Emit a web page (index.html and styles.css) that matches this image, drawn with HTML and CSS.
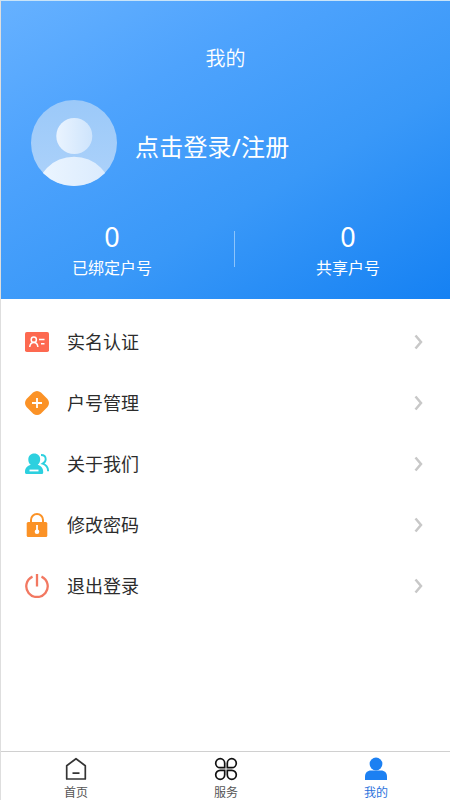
FILE: index.html
```html
<!DOCTYPE html>
<html lang="zh-CN">
<head>
<meta charset="utf-8">
<title>我的</title>
<link rel="stylesheet" href="styles.css">
</head>
<body>
<div class="app">
  <header class="hero">
    <h1 class="title">我的</h1>
    <div class="profile">
      <svg class="avatar" viewBox="0 0 86 86">
        <defs>
          <linearGradient id="disc" x1="0" y1="0" x2="0" y2="1"><stop offset="0" stop-color="#9bc9f9"/><stop offset="1" stop-color="#add2fa"/></linearGradient>
          <linearGradient id="head" x1="0" y1="0" x2="1" y2="0"><stop offset="0" stop-color="#eaf4ff"/><stop offset="1" stop-color="#cee4fc"/></linearGradient>
          <linearGradient id="body" x1="0" y1="0" x2="1" y2="0"><stop offset="0" stop-color="#edf6ff"/><stop offset="1" stop-color="#d9eafd"/></linearGradient>
          <clipPath id="round"><circle cx="43" cy="43" r="43"/></clipPath>
        </defs>
        <circle cx="43" cy="43" r="43" fill="url(#disc)"/>
        <circle cx="43.3" cy="36" r="18" fill="url(#head)"/>
        <circle cx="43" cy="95" r="38.3" fill="url(#body)" clip-path="url(#round)"/>
      </svg>
      <span class="login">点击登录/注册</span>
    </div>
    <div class="stats">
      <div class="stat"><b class="num">0</b><span class="label">已绑定户号</span></div>
      <i class="divider"></i>
      <div class="stat"><b class="num">0</b><span class="label">共享户号</span></div>
    </div>
  </header>
  <main class="menu">
    <div class="row">
      <svg class="icon" viewBox="0 0 24 24"><rect y="2" width="24" height="20" rx="1.8" fill="#fd6950"/><g fill="none" stroke="#fff" stroke-width="1.5"><circle cx="8.8" cy="9.7" r="2.6"/><path d="M4.7 17c.3-3 1.800-4.600 4.100-4.600s3.800 1.600 4.100 4.600M14 9.500h5.500M16 13.700h3.500"/></g></svg>
      <span class="name">实名认证</span>
      <svg class="arrow" viewBox="0 0 10 16"><path d="M1.500 1.500 7 8l-5.500 6.500"/></svg>
    </div>
    <div class="row">
      <svg class="icon" viewBox="0 0 24 24"><path d="M8 1.500Q12-1.500 16 1.500L22.500 8Q25.500 12 22.500 16L16 22.500Q12 25.500 8 22.500L1.500 16Q-1.500 12 1.500 8Z" fill="#fb9226"/><path d="M12 7v10M7 12h10" stroke="#fff" stroke-width="1.800"/></svg>
      <span class="name">户号管理</span>
      <svg class="arrow" viewBox="0 0 10 16"><path d="M1.500 1.500 7 8l-5.500 6.500"/></svg>
    </div>
    <div class="row">
      <svg class="icon" viewBox="0 0 24 24"><path d="M9.200 1.500c3.700 0 6 2.500 6 5.800 0 2.400-.9 4.200-2.500 5.400 3.300.8 5.500 3.500 5.500 7v.8c0 .9-.5 1.500-1.400 1.500H1.400C.5 22 0 21.500 0 20.600v-.8c0-3.500 2.300-6.200 5.800-7-1.600-1.200-2.500-3-2.500-5.400 0-3.300 2.400-5.900 5.900-5.900Z" fill="#2dd0df"/><path d="M4.500 18.500h9" stroke="#fff" stroke-width="1.800"/><path d="M16 3c3 0 4.700 1.700 4.700 4.200 0 2-1 3.400-3 4.500 3.500 1.200 5.300 3.600 5.400 7.500" fill="none" stroke="#2dd0df" stroke-width="1.900"/></svg>
      <span class="name">关于我们</span>
      <svg class="arrow" viewBox="0 0 10 16"><path d="M1.500 1.500 7 8l-5.500 6.500"/></svg>
    </div>
    <div class="row">
      <svg class="icon" viewBox="0 0 24 24"><path d="M6 11V7a6 6 0 0 1 12 0V11" fill="none" stroke="#fb9226" stroke-width="2"/><rect x="1.700" y="9" width="20.600" height="15" rx="1.500" fill="#fb9226"/><path d="M12 12v5" stroke="#fff" stroke-width="1.800"/><circle cx="12" cy="18.800" r="2.300" fill="#fff"/></svg>
      <span class="name">修改密码</span>
      <svg class="arrow" viewBox="0 0 10 16"><path d="M1.500 1.500 7 8l-5.500 6.500"/></svg>
    </div>
    <div class="row">
      <svg class="icon" viewBox="0 0 24 24"><path d="M7.500 2.600a10.700 10.700 0 1 0 9 0M12 0v12.500" fill="none" stroke="#f27861" stroke-width="2.300"/></svg>
      <span class="name">退出登录</span>
      <svg class="arrow" viewBox="0 0 10 16"><path d="M1.500 1.500 7 8l-5.500 6.500"/></svg>
    </div>
  </main>
  <nav class="tabs">
    <div class="tab">
      <svg class="tab-icon" viewBox="0 0 24 24"><path d="M2.700 8.700 12 1.700l9.300 7V22H2.700ZM8.500 16.200h7" fill="none" stroke="#343434" stroke-width="1.700" stroke-linejoin="round"/></svg>
      <span>首页</span>
    </div>
    <div class="tab">
      <svg class="tab-icon" viewBox="0 0 24 24"><path d="M10.700 10.700H6.200a4.500 4.500 0 1 1 4.500-4.500ZM13.300 10.700h4.500a4.500 4.500 0 1 0-4.500-4.500ZM10.700 13.300H6.200a4.500 4.500 0 1 0 4.500 4.500ZM13.300 13.300h4.500a4.500 4.500 0 1 1-4.500 4.500Z" fill="none" stroke="#111" stroke-width="1.700"/></svg>
      <span>服务</span>
    </div>
    <div class="tab active">
      <svg class="tab-icon" viewBox="0 0 24 24"><circle cx="12" cy="7" r="6.400" fill="#1c80f2"/><path d="M1 23v-3.500c0-3.700 2.500-6 6-6h10c3.500 0 6 2.300 6 6V23Z" fill="#1c80f2"/></svg>
      <span>我的</span>
    </div>
  </nav>
</div>
</body>
</html>
```

FILE: styles.css
```css
* { box-sizing: border-box; }
body {
  margin: 0;
  font-family: "Noto Sans", "Noto Sans CJK SC", sans-serif;
  font-weight: 400;
  color: #2c2c2c;
  background: #fff;
}
.app {
  height: 800px;
  display: flex;
  flex-direction: column;
  overflow: hidden;
  border-top: 1px solid #c9e4f8;
  border-left: 1px solid #dedede;
}
svg { display: block; flex: none; }
.hero {
  height: 298px;
  flex: none;
  color: #fff;
  background: linear-gradient(150deg, #66b1ff 0%, #4ea3fd 30%, #3998f8 62%, #1581f3 100%);
}
.title {
  margin: 0;
  padding-top: 43px;
  font-size: 20px;
  line-height: 30px;
  font-weight: 350;
  text-align: center;
}
.profile {
  display: flex;
  align-items: center;
  margin-top: 26px;
  padding-left: 30px;
  gap: 18px;
}
.avatar { width: 86px; height: 86px; }
.login { font-size: 24px; line-height: 36px; padding-top: 7px; letter-spacing: 0.2px; }
.stats {
  display: flex;
  align-items: flex-start;
  justify-content: space-between;
  margin-top: 34px;
}
.stat { width: 222px; display: flex; flex-direction: column; align-items: center; }
.stat:last-child { width: 204px; }
.num { font-size: 27px; line-height: 34px; font-weight: 400; }
.label { font-size: 16px; line-height: 24px; margin-top: 2px; }
.divider { width: 1px; height: 36px; margin-top: 11px; background: #8cc4fb; }
.menu { flex: 1; padding-top: 12px; }
.row {
  height: 61px;
  display: flex;
  align-items: center;
  padding: 0 26px 0 24px;
}
.icon { width: 24px; height: 24px; }
.name { flex: 1; margin-left: 18px; padding-top: 2px; font-size: 18px; line-height: 27px; }
.arrow { width: 10px; height: 16px; margin-top: 1px; }
.arrow path { fill: none; stroke: #c8c8c8; stroke-width: 2.5; }
.tabs {
  height: 49px;
  flex: none;
  display: flex;
  margin-right: -1px;
  border-top: 1px solid #d0d0d0;
}
.tab {
  flex: 1;
  display: flex;
  flex-direction: column;
  align-items: center;
  padding-top: 5px;
  font-size: 12px;
  line-height: 18px;
  color: #555;
}
.tab-icon { width: 24px; height: 24px; margin-bottom: 3px; }
.active { color: #2b72dc; }
```
